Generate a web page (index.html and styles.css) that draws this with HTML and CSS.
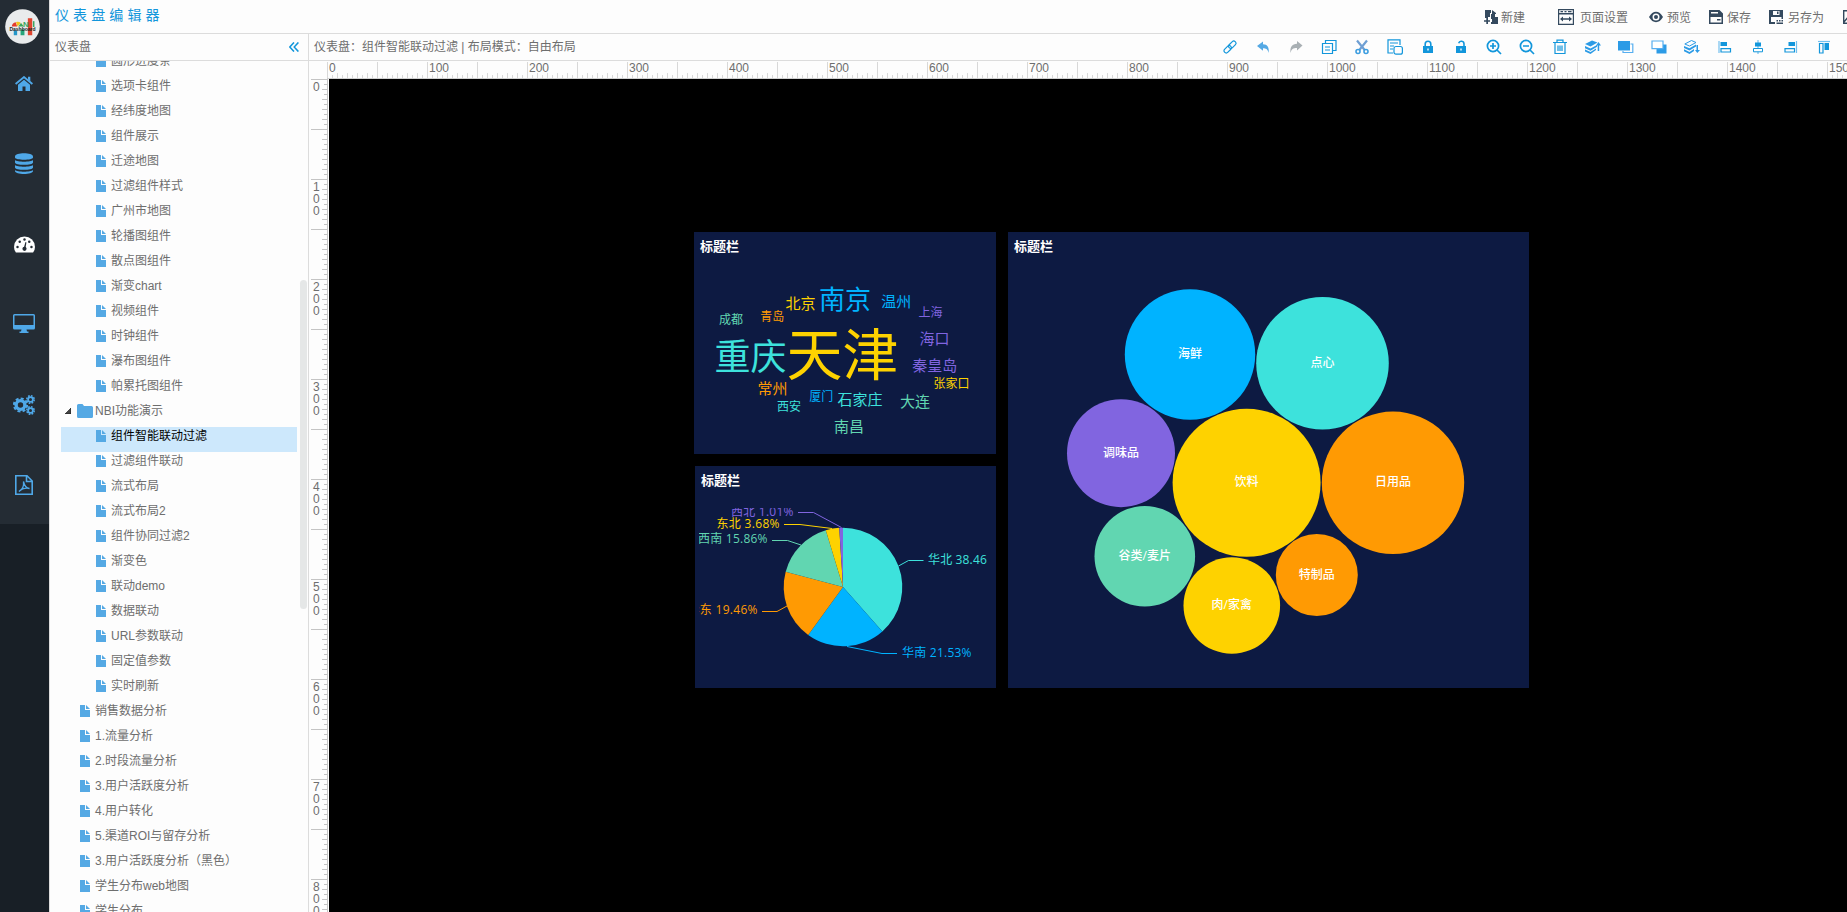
FILE: index.html
```html
<!DOCTYPE html>
<html lang="zh-CN">
<head>
<meta charset="utf-8">
<title>仪表盘编辑器</title>
<link rel="stylesheet" href="styles.css">
</head>
<body>
<svg class="defs" width="0" height="0">
  <symbol id="doc" viewBox="0 0 10 12"><path d="M0 0H5V5H10V12H0Z"/><path d="M6 0L10 4H6Z"/></symbol>
  <symbol id="folder" viewBox="0 0 16 14"><path d="M0 1.500Q0 0 1.500 0H5.500L7 2H14.500Q16 2 16 3.500V12.500Q16 14 14.500 14H1.500Q0 14 0 12.500Z"/></symbol>
</svg>
<div class="app">
  <nav class="rail">
    <div class="rail-top">
      <svg class="logo" viewBox="0 0 36 36"><circle cx="18" cy="18" r="17.800" fill="#e9ebec"/><path d="M7 18a4.800 4.800 0 0 1 4-4.500l1.500 4.500Z" fill="#e43b2c"/><path d="M11.300 13.400a5 5 0 0 1 5 1l-3.500 3.600Z" fill="#f4c51d"/><path d="M16.500 14.500l3 3.500h-6Z" fill="#39a661"/><path d="M9 22h3.500v5H9z" fill="#2596c8"/><path d="M16 21h4v6h-4z" fill="#27a57a"/><path d="M23.500 9.500h4.500v17.500h-4.500z" rx="2" fill="#e0452f"/><text x="18.500" y="18.500" class="lg1" fill="#39a661">N</text><path d="M29.500 12.500v6" stroke="#39a661" stroke-width="1.600"/><text x="4.500" y="23" class="lg2" textLength="27" lengthAdjust="spacingAndGlyphs">Dashboard</text></svg>
      <svg class="ri i1" viewBox="0 0 18 15"><path d="M9 3.700L3 8.700V15h4.500V10.500h3V15H15V8.700Z"/><path d="M.6 8L9 1.100L17.400 8" fill="none" stroke="#4fa8e8" stroke-width="1.900"/><path d="M13 .8h2.300v4.700L13 3.600Z"/></svg>
      <svg class="ri i2" viewBox="0 0 18 21"><path d="M0 3.500C0-.9 18-.9 18 3.500V4.500C18 7.500 0 7.500 0 4.500ZM0 7c2 2.300 16 2.300 18 0v2.500c0 3.100-18 3.100-18 0ZM0 12c2 2.300 16 2.300 18 0v2.500c0 3.100-18 3.100-18 0ZM0 17c2 2.300 16 2.300 18 0v1c0 4-18 4-18 0Z"/></svg>
      <svg class="ri i3" viewBox="0 0 22 17"><path d="M2 17Q0 14 0 11a11 11 0 0 1 22 0q0 3-2 6Z" fill="#fff"/><g fill="#242c34"><circle cx="3.700" cy="11" r="1.300"/><circle cx="6" cy="5.500" r="1.300"/><circle cx="11" cy="3.200" r="1.300"/><circle cx="16" cy="5.500" r="1.300"/><circle cx="18.300" cy="11" r="1.300"/><circle cx="11" cy="13" r="2.200"/><path d="M10.300 12L12 6l1 .3-1 6Z"/></g></svg>
      <svg class="ri i4" viewBox="0 0 22 19"><path fill-rule="evenodd" d="M1.500 0h19Q22 0 22 1.500V14q0 1.500-1.500 1.500H13.500l.5 2h1.500V19h-9V17.500H8l.5-2h-7Q0 15.500 0 14V1.500Q0 0 1.500 0ZM1.500 1.500V11H20.500V1.500Z"/></svg>
      <svg class="ri i5" viewBox="0 0 22 20"><g fill="none" stroke="#4fa8e8"><circle cx="7.500" cy="10" r="4.400" stroke-width="3.400"/><circle cx="7.500" cy="10" r="6.600" stroke-width="2" stroke-dasharray="3 2.180"/><circle cx="17.500" cy="4.500" r="2.400" stroke-width="1.800"/><circle cx="17.500" cy="4.500" r="3.700" stroke-width="1.600" stroke-dasharray="1.700 1.200"/><circle cx="17.500" cy="15.500" r="2.400" stroke-width="1.800"/><circle cx="17.500" cy="15.500" r="3.700" stroke-width="1.600" stroke-dasharray="1.700 1.200"/></g></svg>
      <svg class="ri i6" viewBox="0 0 18 20"><g fill="none" stroke="#4fa8e8" stroke-width="1.600"><path d="M.8.800H12L17.200 6V19.200H.8ZM11.500.800V6.500H17"/><path d="M4 16.500C7 15 9 11 8.500 6.500C9.500 11 11 13.500 14.500 13.500C10.500 12.500 6 14 4 16.500Z" stroke-width="1.300"/></g></svg>
    </div>
  </nav>
  <main class="main">
    <header class="header">
      <h1 class="title">仪表盘编辑器</h1>
      <div class="actions">
        <span class="act a1"><svg width="14" height="14" viewBox="0 0 14 14"><path d="M1 0h6v3H6v4H4v1H1ZM8 0l4 3v1H8ZM7 4h4v3h3v7H7v-2h1v-3H7ZM2.300 8h1.700v2.200h2v1.600H4V14H2.300v-2.200H0v-1.600h2.300Z"/></svg>新建</span>
        <span class="act a2"><svg width="16" height="16" viewBox="0 0 16 16"><path fill-rule="evenodd" d="M0 0h16v16H0ZM1.200 1.200V4H14.800V1.200ZM1.200 5.500V14.800H14.800V5.500Z"/><path d="M2.500 2h2.500v1.200H2.500zM6.500 2h2v1.200h-2zM10 2h3.500v1.200H10zM2 10l3-2.600v1.900h6V7.400L14 10l-3 2.600v-1.900H5v1.900Z"/></svg>页面设置</span>
        <span class="act a3"><svg width="14" height="12" viewBox="0 0 14 12"><path fill-rule="evenodd" d="M0 6Q3 .8 7 .8T14 6Q11 11.200 7 11.200T0 6ZM7 2.500a3.500 3.500 0 1 0 0 7 3.500 3.500 0 0 0 0-7Z"/><circle cx="7" cy="6" r="2"/></svg>预览</span>
        <span class="act a4"><svg width="14" height="14" viewBox="0 0 14 14"><path fill-rule="evenodd" d="M0 0H10.500L14 3.500V14H0ZM1.500 7V12.500H12.500V7ZM2 2v1.500h7V2Z"/><path d="M8 9h3.500v1.500H8z"/></svg>保存</span>
        <span class="act a5"><svg width="14" height="14" viewBox="0 0 14 14"><path fill-rule="evenodd" d="M0 0H14V9H12.500V7H2v5h4v2H0ZM4 1v4h6.500V1Z"/><path d="M8 1.500h1.500V4H8zM7.500 10H9v1.500H7.500zM10 10h1.500v1.500H10zM12.500 10H14v1.500h-1.500zM7.500 12.500H14V14H7.500z"/></svg>另存为</span>
        <span class="act a6"><svg width="14" height="14" viewBox="0 0 14 14"><path d="M.7.700h12.600v12.600H.7zM1 12L6 6" fill="none" stroke="#34495e" stroke-width="1.400"/></svg></span>
      </div>
    </header>
    <div class="work">
      <aside class="side">
        <div class="side-head"><span>仪表盘</span><svg width="10" height="10" viewBox="0 0 10 10"><path d="M5 .4L.8 5L5 9.600M9.400.400L5.200 5L9.400 9.600" fill="none" stroke="#1296db" stroke-width="1.500"/></svg></div>
        <div class="tree">
          <ul class="list">
            <li class="row deep"><svg class="doc"><use href="#doc"/></svg>圆形进度条</li>
            <li class="row deep"><svg class="doc"><use href="#doc"/></svg>选项卡组件</li>
            <li class="row deep"><svg class="doc"><use href="#doc"/></svg>经纬度地图</li>
            <li class="row deep"><svg class="doc"><use href="#doc"/></svg>组件展示</li>
            <li class="row deep"><svg class="doc"><use href="#doc"/></svg>迁途地图</li>
            <li class="row deep"><svg class="doc"><use href="#doc"/></svg>过滤组件样式</li>
            <li class="row deep"><svg class="doc"><use href="#doc"/></svg>广州市地图</li>
            <li class="row deep"><svg class="doc"><use href="#doc"/></svg>轮播图组件</li>
            <li class="row deep"><svg class="doc"><use href="#doc"/></svg>散点图组件</li>
            <li class="row deep"><svg class="doc"><use href="#doc"/></svg>渐变chart</li>
            <li class="row deep"><svg class="doc"><use href="#doc"/></svg>视频组件</li>
            <li class="row deep"><svg class="doc"><use href="#doc"/></svg>时钟组件</li>
            <li class="row deep"><svg class="doc"><use href="#doc"/></svg>瀑布图组件</li>
            <li class="row deep"><svg class="doc"><use href="#doc"/></svg>帕累托图组件</li>
            <li class="row group"><svg class="tri" viewBox="0 0 6 6"><path d="M6 0V6H0Z" fill="#444" stroke="#111" stroke-width=".6"/></svg><svg class="folder"><use href="#folder"/></svg>NBI功能演示</li>
            <li class="row deep selected"><svg class="doc"><use href="#doc"/></svg>组件智能联动过滤</li>
            <li class="row deep"><svg class="doc"><use href="#doc"/></svg>过滤组件联动</li>
            <li class="row deep"><svg class="doc"><use href="#doc"/></svg>流式布局</li>
            <li class="row deep"><svg class="doc"><use href="#doc"/></svg>流式布局2</li>
            <li class="row deep"><svg class="doc"><use href="#doc"/></svg>组件协同过滤2</li>
            <li class="row deep"><svg class="doc"><use href="#doc"/></svg>渐变色</li>
            <li class="row deep"><svg class="doc"><use href="#doc"/></svg>联动demo</li>
            <li class="row deep"><svg class="doc"><use href="#doc"/></svg>数据联动</li>
            <li class="row deep"><svg class="doc"><use href="#doc"/></svg>URL参数联动</li>
            <li class="row deep"><svg class="doc"><use href="#doc"/></svg>固定值参数</li>
            <li class="row deep"><svg class="doc"><use href="#doc"/></svg>实时刷新</li>
            <li class="row"><svg class="doc"><use href="#doc"/></svg>销售数据分析</li>
            <li class="row"><svg class="doc"><use href="#doc"/></svg>1.流量分析</li>
            <li class="row"><svg class="doc"><use href="#doc"/></svg>2.时段流量分析</li>
            <li class="row"><svg class="doc"><use href="#doc"/></svg>3.用户活跃度分析</li>
            <li class="row"><svg class="doc"><use href="#doc"/></svg>4.用户转化</li>
            <li class="row"><svg class="doc"><use href="#doc"/></svg>5.渠道ROI与留存分析</li>
            <li class="row"><svg class="doc"><use href="#doc"/></svg>3.用户活跃度分析（黑色）</li>
            <li class="row"><svg class="doc"><use href="#doc"/></svg>学生分布web地图</li>
            <li class="row"><svg class="doc"><use href="#doc"/></svg>学生分布</li>
          </ul>
          <div class="thumb"></div>
        </div>
      </aside>
      <section class="editor">
        <div class="bar">
          <span class="crumb">仪表盘：组件智能联动过滤 | 布局模式：自由布局</span>
          <div class="tools">
            <svg viewBox="0 0 16 16"><g transform="rotate(-45 8 8)" class="ln"><rect x=".5" y="5.800" width="8.500" height="4.400" rx="2"/><rect x="7" y="5.800" width="8.500" height="4.400" rx="2"/></g></svg>
            <svg viewBox="0 0 16 16"><path class="sky" d="M2 7L8 2.500V5.300C12.500 5.300 14.300 8.500 13.700 14C12.500 10 11 9.300 8 9.300V11.700Z"/></svg>
            <svg viewBox="0 0 16 16"><path class="gray" d="M14.500 6.500L9 2V4.700C4 5 1.800 8 2.500 14C3.500 10 5 9 9 9V11.500Z"/></svg>
            <svg viewBox="0 0 16 16"><path class="ln" d="M4.500 4V1.500H15V11.500H12M1.500 4.500H11.500V14.500H1.500ZM4 8h5M4 11h5"/></svg>
            <svg viewBox="0 0 16 16"><path d="M3 1.500L10.700 11M13 1.500L5.300 11" fill="none" stroke="#6f9fd3" stroke-width="2.200"/><circle class="ln cut" cx="4" cy="12.500" r="2"/><circle class="ln cut" cx="12" cy="12.500" r="2"/></svg>
            <svg viewBox="0 0 16 16"><g class="ln"><path d="M13 6V.800H1V14H6M3 4h8M3 7h4M3 10h3"/><rect x="7" y="7.500" width="8.400" height="7.700" rx="2"/></g></svg>
            <svg viewBox="0 0 16 16"><path class="fi" fill-rule="evenodd" d="M3 7H13V14H3ZM7.300 9.500V11.500H8.700V9.500Z"/><path class="ln thick" d="M5.200 7V5a2.800 2.800 0 0 1 5.600 0V7"/></svg>
            <svg viewBox="0 0 16 16"><path class="fi" fill-rule="evenodd" d="M3 7H13V14H3ZM7.300 9.500V11.500H8.700V9.500Z"/><path class="ln thick" d="M11 7V5a2.700 2.700 0 0 0-5.300-.8"/></svg>
            <svg viewBox="0 0 16 16"><g class="ln zm"><circle cx="7" cy="7" r="5.600"/><path d="M11 11l4 4M4 7h6M7 4v6"/></g></svg>
            <svg viewBox="0 0 16 16"><g class="ln zm"><circle cx="7" cy="7" r="5.600"/><path d="M11 11l4 4M4 7h6"/></g></svg>
            <svg viewBox="0 0 16 16"><path class="ln" d="M1 3.500H15M5 3V1.200H11V3M3 4V14.500H13V4M6 6.500V12M8 6.500V12M10 6.500V12"/></svg>
            <svg viewBox="0 0 16 16"><path class="sk" d="M0 5L7 1.500L12.500 3.500L5.500 7.500ZM0 7L5.500 9.500L12 6V7.700L5.500 11.700L0 9.300ZM0 10.500L5.500 13L11 9.500V11L5.500 15L0 12.500ZM12.700 12V6.500H11L13.500 3L16 6.500H14.200V12Z"/></svg>
            <svg viewBox="0 0 16 16"><path class="sk" d="M0 2H12V11.500H0Z"/><path d="M12.500 5H14.800V13.500H5V12" fill="none" stroke="#56aef0" stroke-width="1.200"/></svg>
            <svg viewBox="0 0 16 16"><path class="sk" d="M5.500 5.500H15.500V14.500H5.500Z"/><path d="M1 2H12V9.700H1Z" fill="#fff" stroke="#56aef0" stroke-width="1.200"/></svg>
            <svg viewBox="0 0 16 16"><path d="M.8 5L7.500 1.500L12 3.500L5.500 7Z" fill="none" stroke="#2c9be6"/><path class="sk" d="M0 7L5.500 9.300L12 5.500V7.500L5.500 11.500L0 9ZM0 10.300L5.500 13L10 10V12L5.500 15L0 12.200ZM12.500 6H14V11H16L13.300 14L11 11H12.500Z"/></svg>
            <svg viewBox="0 0 16 16"><path d="M2 2V14" class="ln pale"/><path class="fi" d="M3.500 3H10V7H3.500Z"/><path class="ln" d="M4 9.700H13.500V13H4Z"/></svg>
            <svg viewBox="0 0 16 16"><path d="M8 1V15" class="ln pale"/><path class="fi" d="M5 3.500H11V7.500H5Z"/><path fill="#fff" stroke="#1296db" d="M3.500 9.500H12.500V12.800H3.500Z"/></svg>
            <svg viewBox="0 0 16 16"><path d="M13.500 2V14" class="ln pale"/><path class="fi" d="M5.500 3H12V7H5.500Z"/><path class="ln" d="M2 9.700H11.500V13H2Z"/></svg>
            <svg viewBox="0 0 16 16"><path d="M2 2.500H14" class="ln pale"/><path class="ln" d="M3.500 4.500H7V14H3.500Z"/><path class="fi" d="M8.500 4H13V11H8.500Z"/></svg>
          </div>
        </div>
        <div class="hruler"><span>0</span><span>100</span><span>200</span><span>300</span><span>400</span><span>500</span><span>600</span><span>700</span><span>800</span><span>900</span><span>1000</span><span>1100</span><span>1200</span><span>1300</span><span>1400</span><span>1500</span></div>
        <div class="stage">
          <div class="vruler"><span>0</span><span>100</span><span>200</span><span>300</span><span>400</span><span>500</span><span>600</span><span>700</span><span>800</span></div>
          <div class="canvas">
            <div class="panel p1">
              <h2>标题栏</h2>
              <svg viewBox="694 232 302 222" class="chart words">
                <text x="842.500" y="354.500" class="w56 yellow">天津</text>
                <text x="750.500" y="357" class="w36 teal">重庆</text>
                <text x="845" y="299.700" class="w26 blue">南京</text>
                <text x="800.500" y="303.300" class="w15 yellow">北京</text>
                <text x="896.300" y="301.300" class="w15 blue">温州</text>
                <text x="930.500" y="313" class="w12 purple">上海</text>
                <text x="934.500" y="338.300" class="w15 purple">海口</text>
                <text x="934.700" y="365.300" class="w15 purple">秦皇岛</text>
                <text x="951.500" y="383.500" class="w12 yellow">张家口</text>
                <text x="915" y="401.300" class="w15 green">大连</text>
                <text x="860" y="399.300" class="w15 teal">石家庄</text>
                <text x="821.300" y="397" class="w12 blue">厦门</text>
                <text x="789" y="406.700" class="w12 teal">西安</text>
                <text x="849" y="426.300" class="w15 green">南昌</text>
                <text x="772.500" y="388" class="w15 orange">常州</text>
                <text x="772.300" y="316.500" class="w12 orange">青岛</text>
                <text x="731" y="320" class="w12 green">成都</text>
              </svg>
            </div>
            <div class="panel p2">
              <h2>标题栏</h2>
              <svg viewBox="695 466 301 222" class="chart pie">
                <clipPath id="plot"><rect x="699" y="508" width="288" height="176"/></clipPath>
                <g transform="translate(843 587)">
                  <path class="teal" d="M0 0V-59.300A59.300 59.300 0 0 1 39.330 44.380Z"/>
                  <path class="blue" d="M0 0L39.330 44.380A59.300 59.300 0 0 1 -34.820 48Z"/>
                  <path class="orange" d="M0 0L-34.820 48A59.300 59.300 0 0 1 -57.300 -15.280Z"/>
                  <path class="green" d="M0 0L-57.300 -15.280A59.300 59.300 0 0 1 -17.200 -56.750Z"/>
                  <path class="yellow" d="M0 0L-17.200 -56.750A59.300 59.300 0 0 1 -3.760 -59.180Z"/>
                  <path class="purple" d="M0 0L-3.760 -59.180A59.300 59.300 0 0 1 0 -59.300Z"/>
                </g>
                <g class="lead">
                  <path stroke="#3de2dc" d="M898.500 566L908.500 560.500H923.500"/>
                  <path stroke="#00b3ff" d="M847 646.500L882 653.500H897"/>
                  <path stroke="#ff9a03" d="M787 606L777 611.500H762"/>
                  <path stroke="#61d6b1" d="M801 545L787.500 540.500H772"/>
                  <path stroke="#fed200" d="M832 528.500L800 524.500H784"/>
                  <path stroke="#8165e0" d="M841.500 527.500L813.500 512.500H798"/>
                </g>
                <g clip-path="url(#plot)">
                  <text x="928" y="564.200" class="teal" textLength="58.800">华北 38.46</text>
                  <text x="902" y="657.200" class="blue" textLength="69.500">华南 21.53%</text>
                  <text x="687.500" y="614.200" class="orange" textLength="70">华东 19.46%</text>
                  <text x="698" y="543.200" class="green" textLength="69.500">西南 15.86%</text>
                  <text x="716.500" y="528.200" class="yellow" textLength="63">东北 3.68%</text>
                  <text x="731" y="516.200" class="purple" textLength="62.500">西北 1.01%</text>
                </g>
              </svg>
            </div>
            <div class="panel p3">
              <h2>标题栏</h2>
              <svg viewBox="1008 232 521 456" class="chart bubbles">
                <circle cx="1190" cy="354.500" r="65.200" class="blue"/><text x="1190" y="354">海鲜</text>
                <circle cx="1322.500" cy="363.300" r="66.300" class="teal"/><text x="1322.500" y="363">点心</text>
                <circle cx="1121" cy="453.200" r="54" class="purple"/><text x="1121" y="452.500">调味品</text>
                <circle cx="1246.600" cy="482.800" r="74" class="yellow"/><text x="1246.600" y="482">饮料</text>
                <circle cx="1393" cy="482.800" r="71.200" class="orange"/><text x="1393" y="482">日用品</text>
                <circle cx="1144.800" cy="556.200" r="50.300" class="green"/><text x="1144.800" y="555.500">谷类/麦片</text>
                <circle cx="1231.800" cy="605.500" r="48.300" class="yellow"/><text x="1231.800" y="605">肉/家禽</text>
                <circle cx="1316.800" cy="575" r="41" class="orange"/><text x="1316.800" y="574.500">特制品</text>
              </svg>
            </div>
          </div>
        </div>
      </section>
    </div>
  </main>
</div>
</body>
</html>
```
FILE: styles.css
```css
* { box-sizing: border-box; }
body { margin: 0; overflow: hidden; background: #fdfdfd; color: #6e6e6e; font: 12px/18px "Liberation Sans", "Noto Sans CJK SC", sans-serif; }
svg { display: block; flex: none; }
.defs { position: absolute; }
.app { display: flex; width: 100vw; height: 100vh; overflow: hidden; }

.rail { width: 49px; flex: none; background: #181f26; }
.rail-top { height: 524px; background: #242c34; display: flex; flex-direction: column; padding: 9px 0 0 5px; }
.logo { width: 35px; height: 35px; }
.lg1 { font: bold 8px "Liberation Sans", sans-serif; }
.lg2 { font: bold 5.500px "Liberation Sans", sans-serif; fill: #222; }
.ri { fill: #4fa8e8; }
.i1 { width: 18px; height: 15px; margin: 32px 0 0 10px; }
.i2 { width: 18px; height: 21px; margin: 62px 0 0 10px; }
.i3 { width: 21px; height: 17px; margin: 62px 0 0 9px; }
.i4 { width: 22px; height: 19px; margin: 61px 0 0 8px; }
.i5 { width: 22px; height: 20px; margin: 62px 0 0 8px; }
.i6 { width: 18px; height: 20px; margin: 60px 0 0 10px; }

.main { flex: 1; min-width: 0; display: flex; flex-direction: column; border-left: 1px solid #dcdcdc; }
.header { height: 34px; flex: none; display: flex; justify-content: space-between; border-bottom: 1px solid #dcdcdc; padding-left: 5px; overflow: hidden; }
.title { margin: 5px 0 0; font-size: 14px; line-height: 20px; font-weight: 400; letter-spacing: 4.100px; color: #1296db; white-space: nowrap; }
.actions { display: flex; width: 363px; flex: none; padding-top: 1px; white-space: nowrap; }
.act { display: flex; align-items: center; height: 34px; gap: 4px; flex: none; }
.act svg { fill: #34495e; position: relative; top: -1px; }
.a1 { width: 74px; gap: 3px; }
.a2 { width: 91px; gap: 6px; }
.a3 { width: 60px; }
.a4 { width: 60px; }
.a5 { width: 74px; gap: 5px; }

.work { flex: 1; min-height: 0; display: flex; }
.side { width: 259px; flex: none; display: flex; flex-direction: column; border-right: 1px solid #dcdcdc; }
.side-head { height: 27px; flex: none; border-bottom: 1px solid #dcdcdc; display: flex; align-items: center; justify-content: space-between; padding: 0 9px 0 5px; }
.tree { flex: 1; min-height: 0; display: flex; justify-content: space-between; overflow: hidden; }
.list { list-style: none; margin: -9px 0 0; padding: 0 0 0 11px; width: 247px; flex: none; }
.row { height: 25px; padding: 0 0 7px 19px; display: flex; align-items: center; gap: 5px; white-space: nowrap; }
.deep { padding-left: 35px; }
.group { padding-left: 4px; gap: 2px; }
.selected { background: #cde8fc; color: #000; }
.doc { width: 10px; height: 12px; fill: #55a9e4; }
.folder { width: 16px; height: 14px; fill: #55a9e4; margin-left: 4px; }
.tri { width: 6px; height: 6px; }
.thumb { width: 7px; height: 329px; margin: 219px 1px 0 0; border-radius: 4px; background: #e5e7e7; }

.editor { flex: 1; min-width: 0; display: flex; flex-direction: column; }
.bar { height: 27px; flex: none; border-bottom: 1px solid #dcdcdc; display: flex; align-items: center; justify-content: space-between; padding: 0 15px 0 5px; }
.crumb { white-space: pre; }
.tools { display: flex; gap: 17px; }
.tools svg { width: 16px; height: 16px; }
.ln { fill: none; stroke: #1296db; stroke-width: 1.200; }
.thick { stroke-width: 1.600; }
.cut { stroke: #3d9ee0; stroke-width: 1.600; }
.zm { stroke-width: 1.700; }
.pale { stroke: #73c0ee; }
.fi { fill: #1296db; }
.sk { fill: #2c9be6; }
.sky { fill: #55a9e4; }
.gray { fill: #a9b0b4; }

.hruler { height: 18px; flex: none; margin-left: 18px; display: flex; overflow: hidden; border-bottom: 1px solid #d0d0d0;
  background: repeating-linear-gradient(90deg, #d8d8d8 0 1px, transparent 1px 50px) 0 1px / 100% 17px no-repeat,
    repeating-linear-gradient(90deg, #d8d8d8 0 1px, transparent 1px 10px) 0 100% / 100% 5px no-repeat,
    repeating-linear-gradient(90deg, #d8d8d8 0 1px, transparent 1px 5px) 0 100% / 100% 3px no-repeat; }
.hruler span { width: 100px; flex: none; padding-left: 2px; line-height: 14px; }
.stage { flex: 1; min-height: 0; display: flex; }
.vruler { width: 19px; flex: none; overflow: hidden; border-right: 1px solid #c4c4c4;
  background: repeating-linear-gradient(#c4c4c4 0 1px, transparent 1px 50px) 2px 0 / 17px 100% no-repeat,
    repeating-linear-gradient(#c4c4c4 0 1px, transparent 1px 10px) 100% 0 / 5px 100% no-repeat,
    repeating-linear-gradient(#c4c4c4 0 1px, transparent 1px 5px) 100% 0 / 3px 100% no-repeat; }
.vruler span { display: block; width: 7px; height: 100px; margin-left: 4px; padding-top: 2px; line-height: 12px; word-break: break-all; }
.canvas { flex: 1; margin-left: 1px; position: relative; background: #000; overflow: hidden; }

.panel { position: absolute; background: #0d1a42; }
.panel h2 { position: absolute; left: 6px; top: 6px; margin: 0; font-size: 13px; line-height: 18px; color: #fff; }
.p1 { left: 365px; top: 153px; width: 302px; height: 222px; }
.p2 { left: 366px; top: 387px; width: 301px; height: 222px; }
.p3 { left: 679px; top: 153px; width: 521px; height: 456px; }
.chart { width: 100%; height: 100%; font-family: "Open Sans", "Noto Sans CJK SC", sans-serif; }
.words text, .bubbles text { text-anchor: middle; transform: translateY(.37em); transform-box: fill-box; }
.w56 { font-size: 56px; }
.w36 { font-size: 36px; }
.w26 { font-size: 26px; }
.w15 { font-size: 15px; }
.w12 { font-size: 12px; }
.pie text, .bubbles text { font-size: 12px; }
.bubbles text { fill: #fff; font-weight: 500; }
.lead path { fill: none; stroke-width: 1; }
.yellow { fill: #fed200; }
.teal { fill: #3de2dc; }
.blue { fill: #00b3ff; }
.purple { fill: #8165e0; }
.green { fill: #61d6b1; }
.orange { fill: #ff9a03; }
```
